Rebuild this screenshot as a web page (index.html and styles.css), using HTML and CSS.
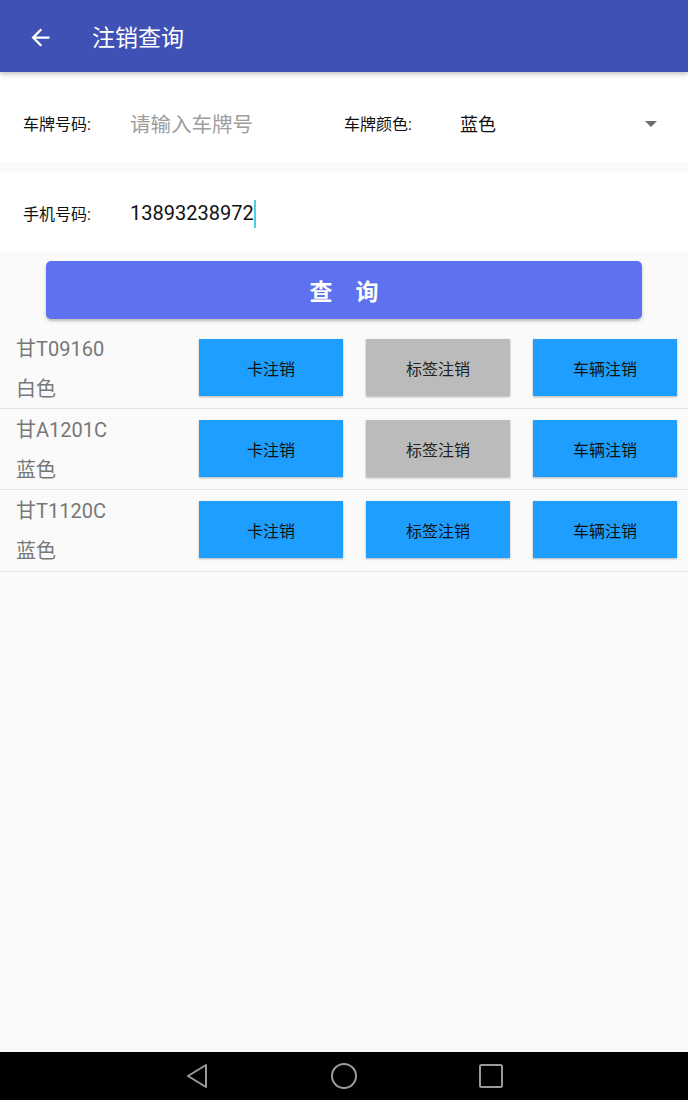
FILE: index.html
```html
<!DOCTYPE html>
<html lang="zh-CN">
<head>
<meta charset="utf-8">
<title>注销查询</title>
<link rel="stylesheet" href="styles.css">
</head>
<body>
<div class="screen">
  <header class="appbar">
    <svg class="back" viewBox="0 0 24 24" width="27" height="27"><path fill="#fff" d="M20 11H7.830l5.590-5.590L12 4l-8 8 8 8 1.410-1.410L7.830 13H20v-2z"/></svg>
    <h1 class="title">注销查询</h1>
  </header>

  <section class="form-row row-plate">
    <div class="half">
      <span class="label">车牌号码:</span>
      <span class="placeholder">请输入车牌号</span>
    </div>
    <div class="half right">
      <span class="label label-color">车牌颜色:</span>
      <span class="spinner-value">蓝色</span>
      <span class="spinner-arrow"></span>
    </div>
  </section>

  <section class="form-row row-phone">
    <span class="label">手机号码:</span>
    <span class="value">13893238972</span><span class="cursor"></span>
  </section>

  <div class="query-wrap">
    <button class="query">查　询</button>
  </div>

  <ul class="list">
    <li class="item">
      <div class="info">
        <div class="plate">甘T09160</div>
        <div class="pcolor">白色</div>
      </div>
      <div class="actions">
        <span class="btn">卡注销</span>
        <span class="btn off">标签注销</span>
        <span class="btn">车辆注销</span>
      </div>
    </li>
    <li class="item">
      <div class="info">
        <div class="plate">甘A1201C</div>
        <div class="pcolor">蓝色</div>
      </div>
      <div class="actions">
        <span class="btn">卡注销</span>
        <span class="btn off">标签注销</span>
        <span class="btn">车辆注销</span>
      </div>
    </li>
    <li class="item">
      <div class="info">
        <div class="plate">甘T1120C</div>
        <div class="pcolor">蓝色</div>
      </div>
      <div class="actions">
        <span class="btn">卡注销</span>
        <span class="btn">标签注销</span>
        <span class="btn">车辆注销</span>
      </div>
    </li>
  </ul>

  <div class="spacer"></div>

  <nav class="navbar">
    <svg width="26" height="28" viewBox="0 0 26 28"><path d="M22 3 L4 14 L22 25 Z" fill="none" stroke="#9a9a9a" stroke-width="2" stroke-linejoin="round"/></svg>
    <svg width="28" height="28" viewBox="0 0 28 28"><circle cx="14" cy="14" r="12" fill="none" stroke="#9a9a9a" stroke-width="2"/></svg>
    <svg width="26" height="26" viewBox="0 0 26 26"><rect x="2" y="2" width="22" height="22" rx="1.5" fill="none" stroke="#9a9a9a" stroke-width="2"/></svg>
  </nav>
</div>
</body>
</html>
```

FILE: styles.css
```css
* { box-sizing: border-box; }
html, body { margin: 0; padding: 0; }
body {
  font-family: Roboto, "Noto Sans CJK SC", "Noto Sans", sans-serif;
  background: #fafafa;
  color: #000;
}
.screen {
  width: 688px;
  height: 1100px;
  display: flex;
  flex-direction: column;
  overflow: hidden;
}
.appbar {
  height: 72px;
  background: #3f51b5;
  display: flex;
  align-items: center;
  padding-left: 27px;
  position: relative;
  z-index: 2;
  box-shadow: 0 2px 5px rgba(0,0,0,0.25);
  flex: none;
}
.back { display: block; margin-top: 2px; }
.title {
  margin: 0 0 0 38px;
  font-size: 23px;
  font-weight: 400;
  color: #fff;
  letter-spacing: 0;
}
.form-row {
  background: #fff;
  display: flex;
  align-items: center;
  flex: none;
}
.row-plate {
  height: 90px;
  padding-top: 12px;
}
.half {
  display: flex;
  align-items: center;
  width: 344px;
  padding-left: 23px;
}
.half.right {
  padding-left: 0;
  padding-right: 31px;
}
.label {
  font-size: 16px;
  color: #111;
  width: 107px;
  flex: none;
}
.label-color { width: 116px; }
.placeholder {
  font-size: 20.5px;
  color: #9e9e9e;
}
.spinner-value {
  font-size: 18px;
  color: #111;
  flex: 1;
}
.spinner-arrow {
  width: 0; height: 0;
  border-left: 6px solid transparent;
  border-right: 6px solid transparent;
  border-top: 6px solid #6d6d6d;
  margin-top: 1px;
}
.row-phone {
  margin-top: 10px;
  height: 80px;
  padding-left: 23px;
  padding-top: 2px;
}
.value {
  font-size: 20px;
  color: #111;
}
.cursor {
  width: 2px;
  height: 28px;
  background: #4dd0e1;
  margin-left: 0;
  margin-top: 2px;
}
.query-wrap {
  padding: 9px 46px 9px 46px;
  flex: none;
}
.query {
  display: block;
  width: 100%;
  height: 58px;
  border: 0;
  border-radius: 5px;
  background: #5e72f0;
  color: #fff;
  font-family: Roboto, "Noto Sans CJK SC", sans-serif;
  font-size: 23px;
  font-weight: 700;
  box-shadow: 0 2px 3px rgba(0,0,0,0.25);
  padding: 0;
}
.list {
  list-style: none;
  margin: 0;
  padding: 0;
  flex: none;
}
.item {
  height: 81px;
  border-bottom: 1px solid #e2e2e2;
  display: flex;
}
.item:last-child { height: 82px; }
.info {
  width: 199px;
  padding-left: 16px;
  color: #777;
  font-size: 20px;
}
.plate {
  line-height: 20px;
  margin-top: 11px;
}
.pcolor {
  line-height: 20px;
  margin-top: 20px;
}
.actions {
  display: flex;
  gap: 23px;
  padding-top: 11px;
}
.btn {
  width: 144px;
  height: 57px;
  background: #1e9eff;
  display: flex;
  align-items: center;
  justify-content: center;
  font-size: 16px;
  color: #111;
  box-shadow: 0 1px 2px rgba(0,0,0,0.3);
}
.btn.off { background: #bbbbbb; color: #222; }
.spacer { flex: 1; }
.navbar {
  height: 48px;
  background: #000;
  display: flex;
  align-items: center;
  justify-content: center;
  gap: 120px;
  flex: none;
}
.navbar svg { display: block; }
```
